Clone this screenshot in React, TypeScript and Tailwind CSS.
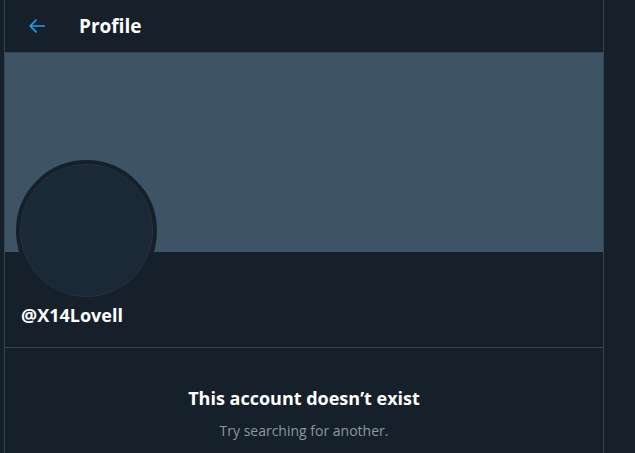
export default function App() {
  return (
    <div
      className="h-[453px] w-[635px] overflow-hidden bg-[#16202a] text-white"
      style={{ fontFamily: '"Open Sans", "Noto Sans", sans-serif' }}
    >
      <div className="ml-[4px] flex h-full w-[600px] flex-col border-x border-[#38444d]">
        {/* Header */}
        <div className="flex h-[53px] shrink-0 items-center border-b border-[#38444d] pl-[21px]">
          <svg viewBox="0 0 24 24" className="h-[22px] w-[22px]" fill="none" stroke="#1da1f2" strokeWidth="1.8" strokeLinecap="round" strokeLinejoin="round">
            <path d="M20 12H4.5M11 5.5 4.5 12l6.5 6.5" />
          </svg>
          <span className="ml-[31px] text-[19px] font-bold">Profile</span>
        </div>

        {/* Banner */}
        <div className="h-[199px] shrink-0 bg-[#3d5466]" />

        {/* Avatar + name */}
        <div className="border-b border-[#38444d] px-[11px] pb-[21px]">
          <div className="-mt-[92px] h-[141px] w-[141px] rounded-full border-[4px] border-[#16202a] bg-[#16202a]">
            <div className="h-full w-full rounded-full border border-[#243342] bg-[#1b2836]" />
          </div>
          <div className="mt-[3px] pl-[5px] text-[18px] font-bold leading-[22px]">@X14Lovell</div>
        </div>

        {/* Empty state */}
        <div className="flex flex-col items-center pt-[38px]">
          <div className="text-[18px] font-bold leading-[24px]">This account doesn’t exist</div>
          <div className="mt-[12px] text-[14px] leading-[18px] text-[#8b98a5]">Try searching for another.</div>
        </div>
      </div>
    </div>
  );
}
